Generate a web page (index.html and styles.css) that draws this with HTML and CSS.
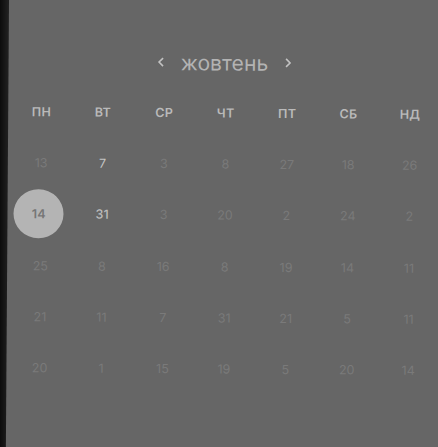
FILE: index.html
```html
<!DOCTYPE html>
<html lang="uk">
<head>
<meta charset="utf-8">
<link rel="stylesheet" href="styles.css">
</head>
<body>
<div class="panel">
  <div class="month">
    <svg class="chev" width="7" height="10" viewBox="0 0 7 10"><polyline points="5.5,1 1.5,5 5.5,9" fill="none" stroke="#c2c2c2" stroke-width="1.6"/></svg>
    <span class="month-name">жовтень</span>
    <svg class="chev" width="7" height="10" viewBox="0 0 7 10"><polyline points="1.5,1 5.5,5 1.5,9" fill="none" stroke="#c2c2c2" stroke-width="1.6"/></svg>
  </div>
  <div class="grid">
    <div class="wd">ПН</div><div class="wd">ВТ</div><div class="wd">СР</div><div class="wd">ЧТ</div><div class="wd">ПТ</div><div class="wd">СБ</div><div class="wd">НД</div>

    <div class="d">13</div><div class="d on">7</div><div class="d">3</div><div class="d">8</div><div class="d">27</div><div class="d">18</div><div class="d">26</div>

    <div class="d"><span class="sel">14</span></div><div class="d on b">31</div><div class="d">3</div><div class="d">20</div><div class="d">2</div><div class="d">24</div><div class="d">2</div>

    <div class="d">25</div><div class="d">8</div><div class="d">16</div><div class="d">8</div><div class="d">19</div><div class="d">14</div><div class="d">11</div>

    <div class="d">21</div><div class="d">11</div><div class="d">7</div><div class="d">31</div><div class="d">21</div><div class="d">5</div><div class="d">11</div>

    <div class="d">20</div><div class="d">1</div><div class="d">15</div><div class="d">19</div><div class="d">5</div><div class="d">20</div><div class="d">14</div>
  </div>
</div>
</body>
</html>
```

FILE: styles.css
```css
html, body {
  margin: 0;
  padding: 0;
  overflow: hidden;
}
body {
  width: 438px;
  height: 447px;
  background: linear-gradient(to right, #0c0c0c 0, #161616 4px, #202020 8px, #222 10px);
  font-family: Inter, "Noto Sans", sans-serif;
}
.panel {
  margin-left: 9px;
  margin-top: -20px;
  width: 445px;
  height: 468px;
  background: #666666;
  padding-top: 64px;
  box-sizing: border-box;
  transform: rotate(0.4deg);
  transform-origin: 0 20px;
}
.month {
  width: 432px;
  height: 36px;
  display: flex;
  align-items: center;
  justify-content: center;
  gap: 16px;
}
.chev {
  display: block;
  margin-top: -3px;
}
.month-name {
  font-size: 21px;
  line-height: 36px;
  color: #b3b3b3;
  letter-spacing: 0.1px;
}
.grid {
  width: 430px;
  margin-left: 2.5px;
  margin-top: 5.5px;
  display: grid;
  grid-template-columns: repeat(7, 1fr);
  grid-auto-rows: 51.3px;
}
.wd, .d {
  display: flex;
  align-items: center;
  justify-content: center;
}
.wd {
  font-size: 12.5px;
  font-weight: 600;
  color: #bababa;
  letter-spacing: 0.3px;
}
.d {
  font-size: 12.5px;
  color: #7a7a7a;
}
.d.on {
  color: #c4c4c4;
}
.d.b {
  font-weight: 500;
  color: #bdbdbd;
}
.sel {
  flex: none;
  width: 50px;
  height: 49px;
  border-radius: 50%;
  background: #b4b4b4;
  color: #767676;
  font-weight: 600;
  display: flex;
  align-items: center;
  justify-content: center;
  margin-left: -4px;
}
```
